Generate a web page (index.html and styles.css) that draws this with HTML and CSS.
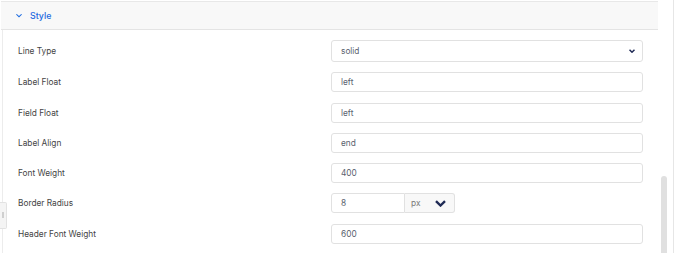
FILE: index.html
```html
<!DOCTYPE html>
<html lang="en">
<head>
  <meta charset="UTF-8">
  <meta name="viewport" content="width=device-width, initial-scale=1.0">
  <title>Style Settings</title>
  <link rel="stylesheet" href="styles.css">
</head>
<body>
  <div class="page">
    <div class="panel">
      <div class="section-head">
        <svg class="head-chevron" width="6" height="4" viewBox="0 0 6 4"><path d="M0 0.6 L3 3.4 L6 0.6 L5.2 0 L3 2 L0.8 0 Z" fill="#1b6ae0"/></svg>
        <span class="section-title">Style</span>
      </div>

      <div class="section-body">
        <div class="handle"><span class="handle-mark"></span></div>

        <div class="form-row">
          <label>Line Type</label>
          <div class="field select-field">
            <span>solid</span>
            <svg width="6" height="4" viewBox="0 0 6 4"><path d="M0.5 0.7 L3 3.2 L5.5 0.7" fill="none" stroke="#1f2a55" stroke-width="1.5"/></svg>
          </div>
        </div>

        <div class="form-row">
          <label>Label Float</label>
          <div class="field">left</div>
        </div>

        <div class="form-row">
          <label>Field Float</label>
          <div class="field">left</div>
        </div>

        <div class="form-row">
          <label>Label Align</label>
          <div class="field">end</div>
        </div>

        <div class="form-row">
          <label>Font Weight</label>
          <div class="field">400</div>
        </div>

        <div class="form-row">
          <label>Border Radius</label>
          <div class="unit-group">
            <div class="unit-value">8</div>
            <div class="unit-select">
              <span>px</span>
              <svg width="11" height="7" viewBox="0 0 11 7"><path d="M1 1.2 L5.5 5.5 L10 1.2" fill="none" stroke="#1f2a55" stroke-width="2.4"/></svg>
            </div>
          </div>
        </div>

        <div class="form-row">
          <label>Header Font Weight</label>
          <div class="field">600</div>
        </div>
      </div>
    </div>

    <div class="scroll-track">
      <div class="scroll-thumb"></div>
    </div>
  </div>
</body>
</html>
```

FILE: styles.css
```css
/* Page */
body {
  margin: 0;
  padding: 0;
  background: #fff;
  font-family: 'Inter', 'Liberation Sans', sans-serif;
  font-size: 8.3px;
  color: #444;
  overflow: hidden;
}

.page {
  display: flex;
  height: 253px;
}

/* Panel */
.panel {
  width: 660px;
  padding-left: 1px;
}

.section-head {
  display: flex;
  align-items: center;
  height: 27px;
  margin-top: 1px;
  padding-left: 15px;
  background-color: #f8f8f8;
  border-top: 1px solid #e8e8e8;
  border-bottom: 1px solid #e4e4e4;
}

.head-chevron {
  margin-right: 8px;
}

.section-title {
  color: #1b6ae0;
  font-size: 8.8px;
  font-weight: 500;
}

.section-body {
  position: relative;
  padding-top: 10px;
  margin-left: 1px;
  border-left: 1px solid #ececec;
  height: 222px;
}

/* Little drag handle sitting on the left edge */
.handle {
  position: absolute;
  left: -3px;
  top: 172px;
  width: 6px;
  height: 25px;
  background-color: #f4f4f4;
  border: 1px solid #e2e2e2;
  border-left: none;
  border-radius: 0 2px 2px 0;
}

.handle-mark {
  position: absolute;
  left: 2px;
  top: 9px;
  width: 2px;
  height: 6px;
  background-color: #cfcfcf;
}

/* Rows */
.form-row {
  display: flex;
  align-items: center;
  margin-bottom: 10.3px;
}

.form-row label {
  width: 313px;
  padding-left: 15px;
}

.field {
  box-sizing: border-box;
  width: 312px;
  height: 20px;
  display: flex;
  align-items: center;
  padding: 0 9px;
  border: 1px solid #e1e1e1;
  border-radius: 3px;
  color: #5a5f6e;
}

.select-field {
  height: 22px;
  justify-content: space-between;
  padding-right: 7px;
}

/* Value + unit */
.unit-group {
  display: flex;
  height: 20px;
}

.unit-value {
  box-sizing: border-box;
  width: 74px;
  display: flex;
  align-items: center;
  padding: 0 9px;
  border: 1px solid #e1e1e1;
  border-radius: 3px 0 0 3px;
  color: #5a5f6e;
}

.unit-select {
  box-sizing: border-box;
  width: 50px;
  display: flex;
  align-items: center;
  justify-content: space-between;
  padding: 0 8px 0 6px;
  background-color: #f8f8f8;
  border: 1px solid #e1e1e1;
  border-left: none;
  border-radius: 0 3px 3px 0;
  color: #777;
}

/* Scrollbar */
.scroll-track {
  width: 12px;
  padding-left: 3px;
  border-right: 1px solid #e6e6e6;
}

.scroll-thumb {
  width: 6px;
  height: 80px;
  margin-top: 176px;
  background-color: #e0e0e0;
  border-radius: 3px 3px 0 0;
}
```
